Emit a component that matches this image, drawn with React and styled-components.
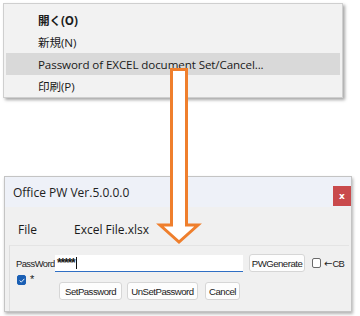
import styled, { createGlobalStyle } from 'styled-components';

const Global = createGlobalStyle`
  html, body {
    margin: 0;
    padding: 0;
    background: #ffffff;
  }
  body {
    font-family: "Open Sans", "Noto Sans CJK JP", sans-serif;
    color: #1a1a1a;
  }
`;

const Page = styled.div`
  position: relative;
  width: 360px;
  height: 316px;
  overflow: hidden;
  padding: 3px 0 0 3px;
  box-sizing: border-box;
`;

const Menu = styled.div`
  width: 340px;
  height: 95px;
  box-sizing: border-box;
  background: #f2f2f2;
  border: 1px solid #cfcfcf;
  box-shadow: 2px 2px 3px rgba(0, 0, 0, 0.35);
  padding: 5px 2px 0 2px;
  display: flex;
  flex-direction: column;
`;

const MenuItem = styled.div`
  height: 22px;
  display: flex;
  align-items: center;
  padding-left: 32px;
  font-size: 11.6px;
  letter-spacing: -0.1px;
  font-weight: ${(p) => (p.$bold ? 700 : 400)};
  background: ${(p) => (p.$active ? '#d9d9d9' : 'transparent')};
  color: #1a1a1a;
`;

const Dialog = styled.div`
  margin: 78px 0 0 1px;
  width: 348px;
  height: 136px;
  box-sizing: border-box;
  background: #f0f0f0;
  border: 1px solid #c4c4c4;
  box-shadow: 1px 2px 3px rgba(0, 0, 0, 0.3);
  display: flex;
  flex-direction: column;
`;

const TitleBar = styled.div`
  height: 29px;
  background: #eef1f8;
  display: flex;
  align-items: flex-end;
  justify-content: space-between;
  padding: 0 0 1px 8px;
`;

const Title = styled.div`
  align-self: center;
  font-size: 12px;
  color: #222;
  margin-top: 1px;
`;

const CloseButton = styled.div`
  width: 18px;
  height: 20px;
  background: #c94a4c;
  color: #fff;
  font-size: 9px;
  font-weight: 700;
  display: flex;
  align-items: center;
  justify-content: center;
  font-family: "DejaVu Sans", sans-serif;
`;

const FileRow = styled.div`
  display: flex;
  align-items: center;
  height: 18px;
  margin-top: 13px;
  padding-left: 13px;
  font-size: 12px;
`;

const FileLabel = styled.span`
  width: 56px;
`;

const Panel = styled.div`
  margin: 7px 2px 0 4px;
  flex: 1;
  border-top: 1px solid #e4e4e4;
  border-left: 1px solid #dedede;
  padding: 8px 0 0 6px;
  display: flex;
  flex-direction: column;
`;

const Row = styled.div`
  display: flex;
  align-items: center;
`;

const SmallLabel = styled.span`
  font-family: "Liberation Sans", sans-serif;
  font-size: 9.4px;
  letter-spacing: -0.55px;
  white-space: nowrap;
  color: #222;
  width: ${(p) => (p.$w ? `${p.$w}px` : 'auto')};
  margin-left: ${(p) => p.$ml || 0}px;
`;

const Arrow = styled.span`
  font-family: "DejaVu Sans", sans-serif;
  font-size: 10px;
  letter-spacing: 0;
`;

const Input = styled.div`
  margin-left: 3px;
  width: 188px;
  height: 17px;
  box-sizing: border-box;
  background: #fff;
  border-bottom: 1px solid #2f6fc4;
  display: flex;
  align-items: center;
  padding-left: 2px;
  font-family: "Liberation Sans", sans-serif;
  font-size: 12px;
  font-weight: 700;
  letter-spacing: -1.2px;
`;

const Caret = styled.span`
  display: inline-block;
  width: 1px;
  height: 12px;
  background: #111;
  margin-left: 2px;
`;

const Button = styled.div`
  width: ${(p) => p.$w}px;
  height: 18px;
  box-sizing: border-box;
  background: #fdfdfd;
  border: 1px solid #d6d6d6;
  border-radius: 3px;
  display: flex;
  align-items: center;
  justify-content: center;
  white-space: nowrap;
  font-family: "Liberation Sans", sans-serif;
  font-size: 9.6px;
  letter-spacing: -0.5px;
  color: #1a1a1a;
  margin-left: ${(p) => p.$ml || 0}px;
`;

const Check = styled.div`
  width: 9px;
  height: 10px;
  box-sizing: border-box;
  border-radius: 2px;
  border: 1px solid ${(p) => (p.$on ? '#1a5fb4' : '#6a6a6a')};
  background: ${(p) => (p.$on ? '#1a5fb4' : '#fff')};
  display: flex;
  align-items: center;
  justify-content: center;
  margin-left: ${(p) => p.$ml || 0}px;
`;

const ButtonRow = styled.div`
  display: flex;
  align-items: flex-start;
`;

const CheckGroup = styled.div`
  display: flex;
  align-items: flex-start;
  width: 42px;
  margin-top: 3px;
  margin-left: 1px;
`;

const Buttons = styled.div`
  display: flex;
  gap: 5px;
  margin-top: 10px;
`;

const Star = styled.span`
  font-family: "Liberation Sans", sans-serif;
  font-size: 11px;
  margin-left: 4px;
  line-height: 9px;
`;

const ArrowSvg = styled.svg`
  position: absolute;
  left: 156px;
  top: 66px;
`;

export default function App() {
  return (
    <>
      <Global />
      <Page>
        <Menu>
          <MenuItem $bold>開く(O)</MenuItem>
          <MenuItem>新規(N)</MenuItem>
          <MenuItem $active>Password of EXCEL document Set/Cancel...</MenuItem>
          <MenuItem>印刷(P)</MenuItem>
        </Menu>

        <Dialog>
          <TitleBar>
            <Title>Office PW Ver.5.0.0.0</Title>
            <CloseButton>x</CloseButton>
          </TitleBar>
          <FileRow>
            <FileLabel>File</FileLabel>
            <span>Excel File.xlsx</span>
          </FileRow>
          <Panel>
            <Row>
              <SmallLabel $w={36}>PassWord</SmallLabel>
              <Input>
                *****<Caret />
              </Input>
              <Button $ml={6} $w={56}>PWGenerate</Button>
              <Check $ml={7} />
              <SmallLabel $ml={3}>
                <Arrow>←</Arrow>CB
              </SmallLabel>
            </Row>
            <ButtonRow>
              <CheckGroup>
                <Check $on>
                  <svg width="6" height="5" viewBox="0 0 6 5">
                    <path d="M0.6 2.6 L2.3 4.1 L5.4 0.8" fill="none" stroke="#fff" strokeWidth="0.9" />
                  </svg>
                </Check>
                <Star>*</Star>
              </CheckGroup>
              <Buttons>
                <Button $w={63}>SetPassword</Button>
                <Button $w={71}>UnSetPassword</Button>
                <Button $w={35} $ml={2}>Cancel</Button>
              </Buttons>
            </ButtonRow>
          </Panel>
        </Dialog>

        <ArrowSvg width="46" height="180" viewBox="0 0 46 180">
          <polygon
            points="15.5,3.5 30.5,3.5 30.5,159 42,159 23,176 4,159 15.5,159"
            fill="#ffffff"
            stroke="#ef7f2d"
            strokeWidth="3"
            strokeLinejoin="miter"
          />
        </ArrowSvg>
      </Page>
    </>
  );
}
